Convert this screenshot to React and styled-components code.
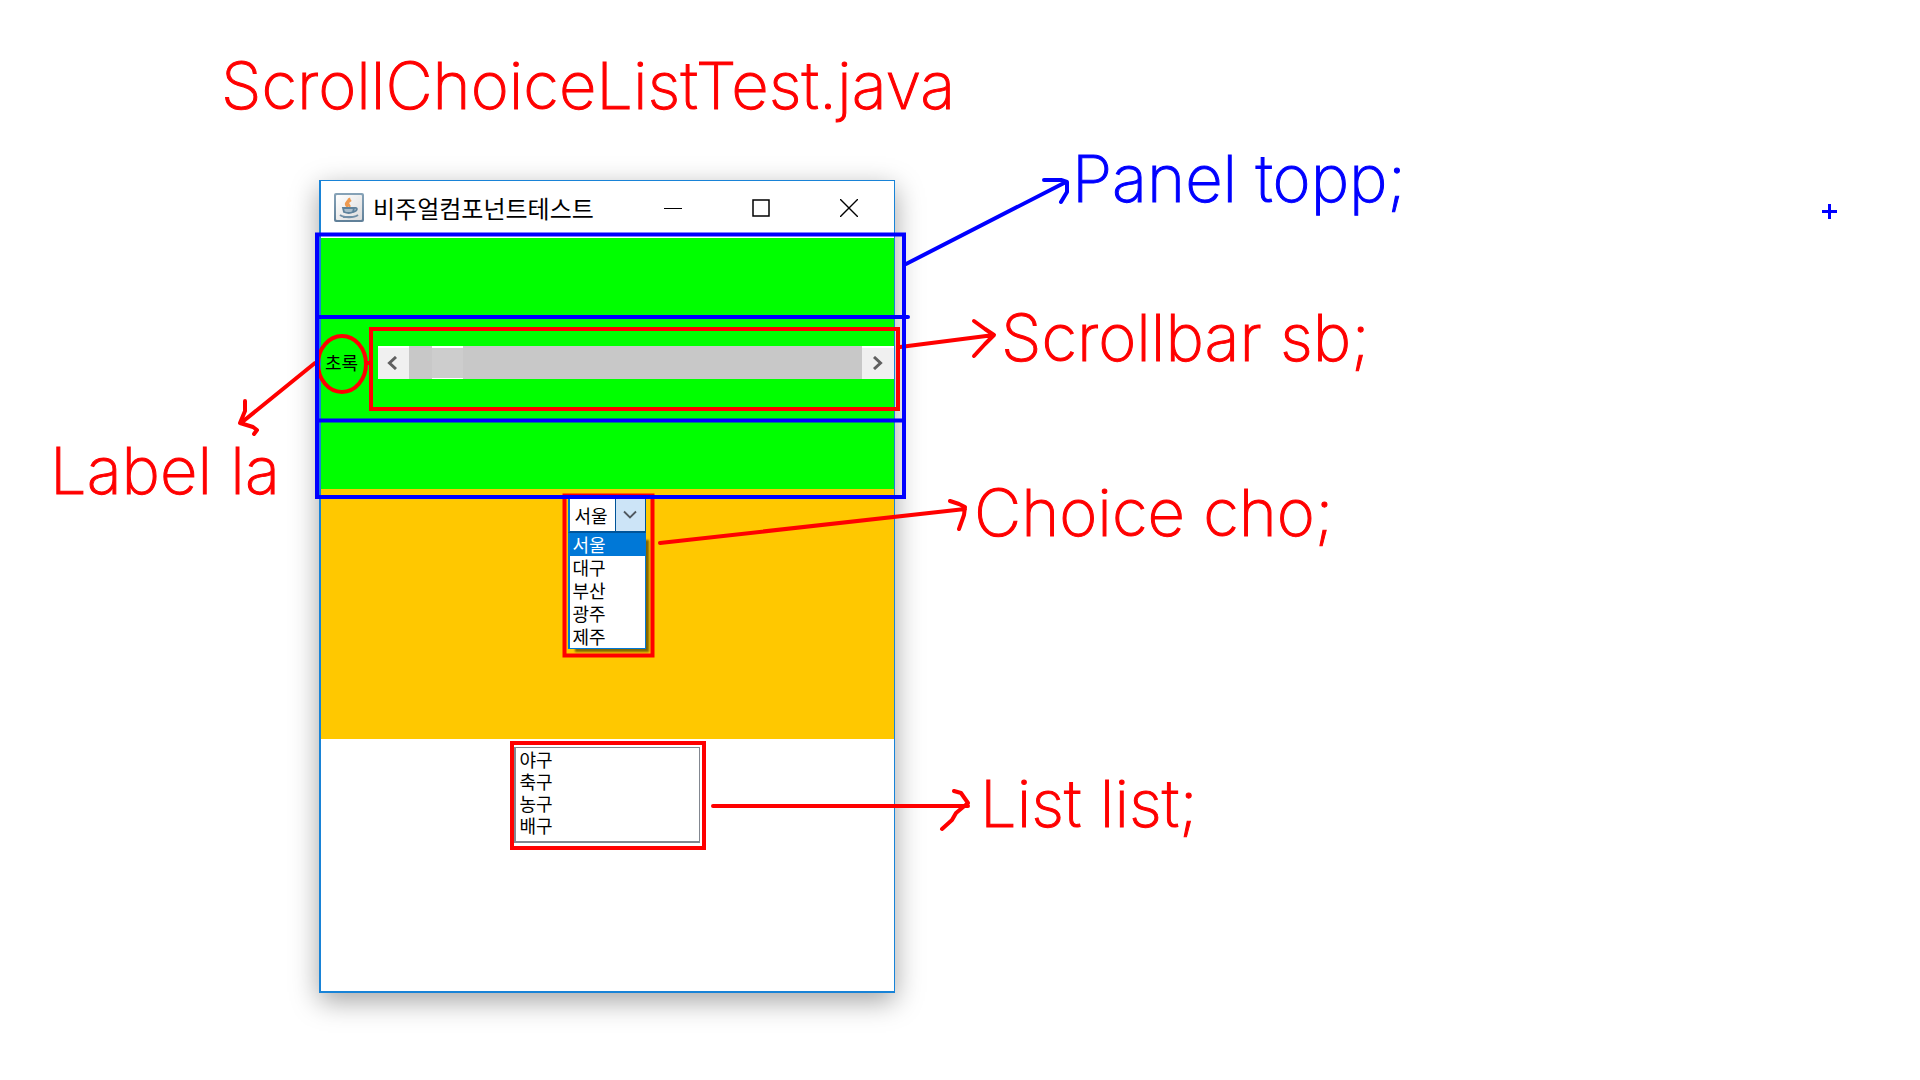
import React from "react";
import styled, { createGlobalStyle } from "styled-components";

const RED = "#ff0000";
const BLUE = "#0000ff";

const GlobalStyle = createGlobalStyle`
  *, *::before, *::after { box-sizing: border-box; }
  body {
    margin: 0;
    background: #ffffff;
    color: #000000;
    font-family: "Noto Sans CJK KR", sans-serif;
  }
`;

const Board = styled.main`
  position: relative;
  min-height: 100vh;
  padding: 46px 0 86px;
  overflow: hidden;
`;

const noteText = `
  margin: 0;
  font-family: Inter, sans-serif;
  font-size: 65px;
  font-weight: 200;
  line-height: 80px;
  white-space: nowrap;
  -webkit-text-stroke: 1px currentColor;
`;

const FileName = styled.h1`
  ${noteText}
  padding-left: 221px;
  color: ${RED};
`;

const Note = styled.p`
  ${noteText}
  position: absolute;
  left: ${(p) => p.$x}px;
  top: ${(p) => p.$y}px;
  color: ${(p) => p.$color || RED};
`;

const Marks = styled.svg`
  position: absolute;
  left: 0;
  top: 0;
  width: 1920px;
  height: 1080px;
  pointer-events: none;
  fill: none;
  stroke-width: 4;
  stroke-linecap: round;
  stroke-linejoin: round;
`;

const Frame = styled.section`
  display: flex;
  flex-direction: column;
  width: 576px;
  margin: 54px 0 0 319px;
  border: solid #1883d7;
  border-width: 1px 1px 2px 2px;
  background: #ffffff;
  box-shadow: 0 8px 26px rgba(0, 0, 0, 0.36);
`;

const TitleBar = styled.header`
  display: flex;
  align-items: center;
  height: 57px;
  padding: 0 16px 4px 13px;
`;

const Title = styled.h2`
  flex: 1;
  margin: 0 0 0 9px;
  font-size: 24px;
  font-weight: 400;
  line-height: 32px;
`;

const WindowButtons = styled.div`
  display: flex;
  gap: 30px;
`;

const WindowButton = styled.button`
  display: flex;
  align-items: center;
  justify-content: center;
  width: 58px;
  height: 32px;
  padding: 0;
  border: 0;
  background: none;
`;

const TopPanel = styled.div`
  display: grid;
  grid-template-rows: 79px 104px 68px;
  background: #00ff00;
`;

const ScrollRow = styled.div`
  grid-row: 2;
  display: flex;
  align-items: center;
  justify-content: space-between;
  padding: 0 0 14px 4px;
`;

const ColourLabel = styled.label`
  font-size: 18px;
  line-height: 24px;
`;

const Scrollbar = styled.div`
  display: flex;
  width: 516px;
  height: 33px;
`;

const ArrowButton = styled.button`
  display: flex;
  align-items: center;
  justify-content: center;
  width: ${(p) => (p.$start ? 31 : 32)}px;
  padding: 0 ${(p) => (p.$start ? 3 : 0)}px 0 0;
  border: 0;
  border-top: 2px solid #ffffff;
  background: #f0f0f0;
`;

const Track = styled.input`
  appearance: none;
  flex: 1;
  min-width: 0;
  height: 33px;
  margin: 0;
  background: #c8c8c8;

  &::-webkit-slider-thumb {
    appearance: none;
    width: 31px;
    height: 33px;
    border: solid #ffffff;
    border-width: 2px 0 1px;
    background: #cdcdcd;
  }
`;

const MiddlePanel = styled.div`
  display: flex;
  justify-content: center;
  height: 250px;
  padding: 9px 2px 0 0;
  background: #ffc800;
`;

const Choice = styled.div`
  width: 78px;
`;

const ChoiceBox = styled.div`
  display: grid;
  height: 35px;

  & > * { grid-area: 1 / 1; }
`;

const ChoiceSelect = styled.select`
  appearance: none;
  width: 100%;
  margin: 0;
  padding: 0 0 0 5px;
  border: solid #005499;
  border-width: 1px 1px 2px 1px;
  border-left: 2px solid #0078d7;
  border-radius: 0;
  background: #ffffff;
  color: #000000;
  font-family: inherit;
  font-size: 18px;
  line-height: 24px;
`;

const ChoiceArrow = styled.span`
  display: flex;
  align-items: center;
  justify-content: center;
  justify-self: end;
  width: 31px;
  border: solid #005499;
  border-width: 1px 1px 2px 1px;
  background: #cce4f7;
  pointer-events: none;
`;

const ChoicePopup = styled.ul`
  margin: 0;
  padding: 0;
  list-style: none;
  border: solid #0078d7;
  border-width: 0 1px 1px 2px;
  background: #ffffff;
  box-shadow: 5px 5px 2px -2px rgba(0, 0, 0, 0.5);
`;

const ChoiceItem = styled.li`
  padding-left: 3px;
  background: ${(p) => (p["aria-selected"] ? "#0078d7" : "#ffffff")};
  color: ${(p) => (p["aria-selected"] ? "#ffffff" : "#000000")};
  font-size: 18px;
  line-height: 23px;
`;

const BottomPanel = styled.div`
  display: flex;
  justify-content: center;
  align-items: flex-start;
  height: 252px;
  padding: 8px 2px 0 0;
`;

const List = styled.select`
  width: 186px;
  height: 96px;
  padding: 0;
  overflow: hidden;
  border: solid #828790;
  border-width: 1px 1px 2px 2px;
  border-radius: 0;
  background: #ffffff;
  color: #000000;
  font-family: inherit;
  font-size: 18px;
  outline: none;
`;

const ListItem = styled.option`
  display: flex;
  align-items: center;
  height: 22px;
  min-height: 22px;
  padding: 0 4px;
`;

const cities = ["서울", "대구", "부산", "광주", "제주"];
const sports = ["야구", "축구", "농구", "배구"];

function JavaIcon() {
  return (
    <svg width="30" height="29" viewBox="0 0 30 29" aria-hidden="true">
      <defs>
        <linearGradient id="cupFrame" x1="0" y1="0" x2="0" y2="1">
          <stop offset="0" stopColor="#87a3b8" />
          <stop offset="1" stopColor="#5f7f98" />
        </linearGradient>
        <linearGradient id="cupPlate" x1="0" y1="0" x2="1" y2="1">
          <stop offset="0" stopColor="#ffffff" />
          <stop offset="1" stopColor="#dcdcdc" />
        </linearGradient>
      </defs>
      <rect width="30" height="29" rx="2" fill="url(#cupFrame)" />
      <rect x="2" y="2" width="26" height="25" rx="1" fill="url(#cupPlate)" />
      <path d="M15 5c1 2-3 4-3 6q0 2 2 3M17 7c-3 2-4 3-2 5q1 1 0 2" fill="none" stroke="#ee9a50" strokeWidth="2.4" />
      <path d="M9 15h11l-1 4q-4 2-9 0zM20 15c4-1 4 3-1 4" fill="#a9bdcb" stroke="#5e829c" strokeWidth="1.8" />
      <path d="M6 22c4 3 14 3 18 0M9 24h11" fill="none" stroke="#6f8fa6" strokeWidth="2" />
    </svg>
  );
}

export default function App() {
  return (
    <Board>
      <GlobalStyle />
      <FileName>ScrollChoiceListTest.java</FileName>

      <Frame>
        <TitleBar>
          <JavaIcon />
          <Title>비주얼컴포넌트테스트</Title>
          <WindowButtons>
            <WindowButton aria-label="최소화">
              <svg width="18" height="18"><path d="M0 9.5h18" stroke="#000" /></svg>
            </WindowButton>
            <WindowButton aria-label="최대화">
              <svg width="18" height="18"><rect x="1" y="1" width="16" height="16" fill="none" stroke="#000" strokeWidth="1.5" /></svg>
            </WindowButton>
            <WindowButton aria-label="닫기">
              <svg width="18" height="18"><path d="M0 0l18 18M18 0L0 18" stroke="#000" strokeWidth="1.4" /></svg>
            </WindowButton>
          </WindowButtons>
        </TitleBar>

        <TopPanel>
          <ScrollRow>
            <ColourLabel htmlFor="green">초록</ColourLabel>
            <Scrollbar>
              <ArrowButton $start aria-label="감소">
                <svg width="10" height="14"><path d="M9 1L2.5 7L9 13" fill="none" stroke="#606060" strokeWidth="3" /></svg>
              </ArrowButton>
              <Track id="green" type="range" min="0" max="255" defaultValue="14" />
              <ArrowButton aria-label="증가">
                <svg width="10" height="14"><path d="M1 1L7.5 7L1 13" fill="none" stroke="#606060" strokeWidth="3" /></svg>
              </ArrowButton>
            </Scrollbar>
          </ScrollRow>
        </TopPanel>

        <MiddlePanel>
          <Choice>
            <ChoiceBox>
              <ChoiceSelect aria-label="도시" defaultValue="서울">
                {cities.map((c) => <option key={c}>{c}</option>)}
              </ChoiceSelect>
              <ChoiceArrow>
                <svg width="14" height="10"><path d="M1 1.5l6 6l6-6" fill="none" stroke="#505860" strokeWidth="1.8" /></svg>
              </ChoiceArrow>
            </ChoiceBox>
            <ChoicePopup role="listbox" aria-label="도시">
              {cities.map((c, i) => (
                <ChoiceItem key={c} role="option" aria-selected={i === 0}>{c}</ChoiceItem>
              ))}
            </ChoicePopup>
          </Choice>
        </MiddlePanel>

        <BottomPanel>
          <List size={4} aria-label="운동">
            {sports.map((s) => <ListItem key={s}>{s}</ListItem>)}
          </List>
        </BottomPanel>
      </Frame>

      <Marks viewBox="0 0 1920 1080" aria-hidden="true">
        <g stroke={RED}>
          <ellipse cx="342" cy="364" rx="24" ry="28" />
          <path d="M366 363h4" />
          <rect x="371" y="329" width="527" height="80" strokeLinejoin="miter" />
          <rect x="564.5" y="495.5" width="88" height="160" strokeLinejoin="miter" />
          <rect x="512" y="743" width="192" height="105" strokeLinejoin="miter" />
          <path d="M315 363L241 423M245 401V411L240 423L253 427L257 430L254 434" />
          <path d="M900 347L994 335M974 321L985 329L994 335L985 344L974 356" />
          <path d="M660 543L965 509M950 501L959 504L965 507L964 515L959 529" />
          <path d="M713 806H968M954 791L961 793L968 803L956 813L952 820L942 829" />
        </g>
        <g stroke={BLUE}>
          <rect x="317" y="234.5" width="587" height="262.5" strokeLinejoin="miter" />
          <path d="M319 317H908M319 420.5H902" />
          <path d="M906 264L1066 182M1044 180H1061L1067 182L1067 192L1061 202" />
          <path d="M1822 211.5h15M1829.5 204v15" strokeWidth="3" strokeLinecap="butt" />
        </g>
      </Marks>

      <Note $x={1072} $y={139} $color={BLUE}>Panel topp;</Note>
      <Note $x={1001} $y={298}>Scrollbar sb;</Note>
      <Note $x={974} $y={473}>Choice cho;</Note>
      <Note $x={980} $y={764}>List list;</Note>
      <Note $x={50} $y={431}>Label la</Note>
    </Board>
  );
}
